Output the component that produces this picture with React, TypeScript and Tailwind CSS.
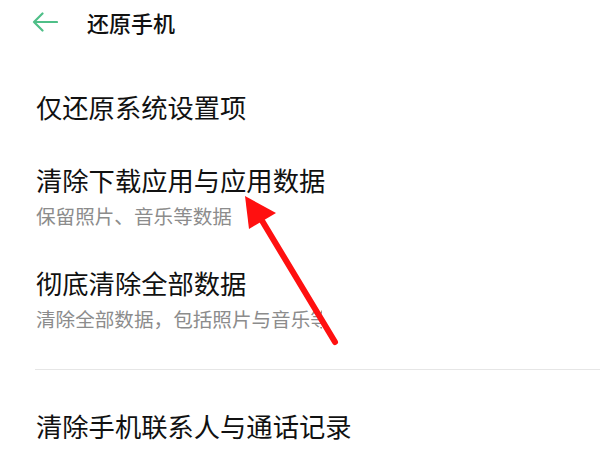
import React from 'react';

const FONT = { fontFamily: '"Noto Sans CJK SC", "Noto Sans", sans-serif' };

type Item = { title: string; sub?: string; mt: string };

const items: Item[] = [
  { title: '仅还原系统设置项', mt: 'mt-[46px]' },
  { title: '清除下载应用与应用数据', sub: '保留照片、音乐等数据', mt: 'mt-[39px]' },
  { title: '彻底清除全部数据', sub: '清除全部数据，包括照片与音乐等', mt: 'mt-[36px]' },
];

export default function App() {
  return (
    <div className="relative w-[600px] h-[450px] overflow-hidden bg-white" style={FONT}>
      {/* Header */}
      <header className="h-[44px] flex items-center">
        <svg className="ml-[32px] w-[26px] h-[20px]" viewBox="0 0 26 20" fill="none">
          <path d="M25 10H2M10.5 1.5L2 10l8.5 8.5" stroke="#4fbf88" strokeWidth="2.2" strokeLinecap="round" strokeLinejoin="round" />
        </svg>
        <h1 className="ml-[29px] text-[22px] leading-[44px] font-medium text-[#111]">还原手机</h1>
      </header>

      <div className="pl-[36px]">
        {items.map((it) => (
          <div key={it.title} className={it.mt}>
            <p className="text-[26.3px] leading-[34px] text-[#111] whitespace-nowrap">{it.title}</p>
            {it.sub && (
              <p className="mt-[5px] text-[19.6px] leading-[28px] text-[#8c8c8c] whitespace-nowrap overflow-hidden w-[286px]">
                {it.sub}
              </p>
            )}
          </div>
        ))}

        <div className="mt-[36px] h-px bg-[#e6e6e6] -ml-[1px]" />

        <p className="mt-[39px] text-[26.3px] leading-[34px] text-[#111] whitespace-nowrap">清除手机联系人与通话记录</p>
      </div>

      {/* annotation arrow */}
      <svg className="absolute left-0 top-0 pointer-events-none" width="600" height="450" viewBox="0 0 600 450">
        <line x1="335" y1="342" x2="258" y2="214" stroke="#ff1010" strokeWidth="6" strokeLinecap="round" />
        <polygon points="245,196 276,213 249,229" fill="#ff1010" />
      </svg>
    </div>
  );
}
